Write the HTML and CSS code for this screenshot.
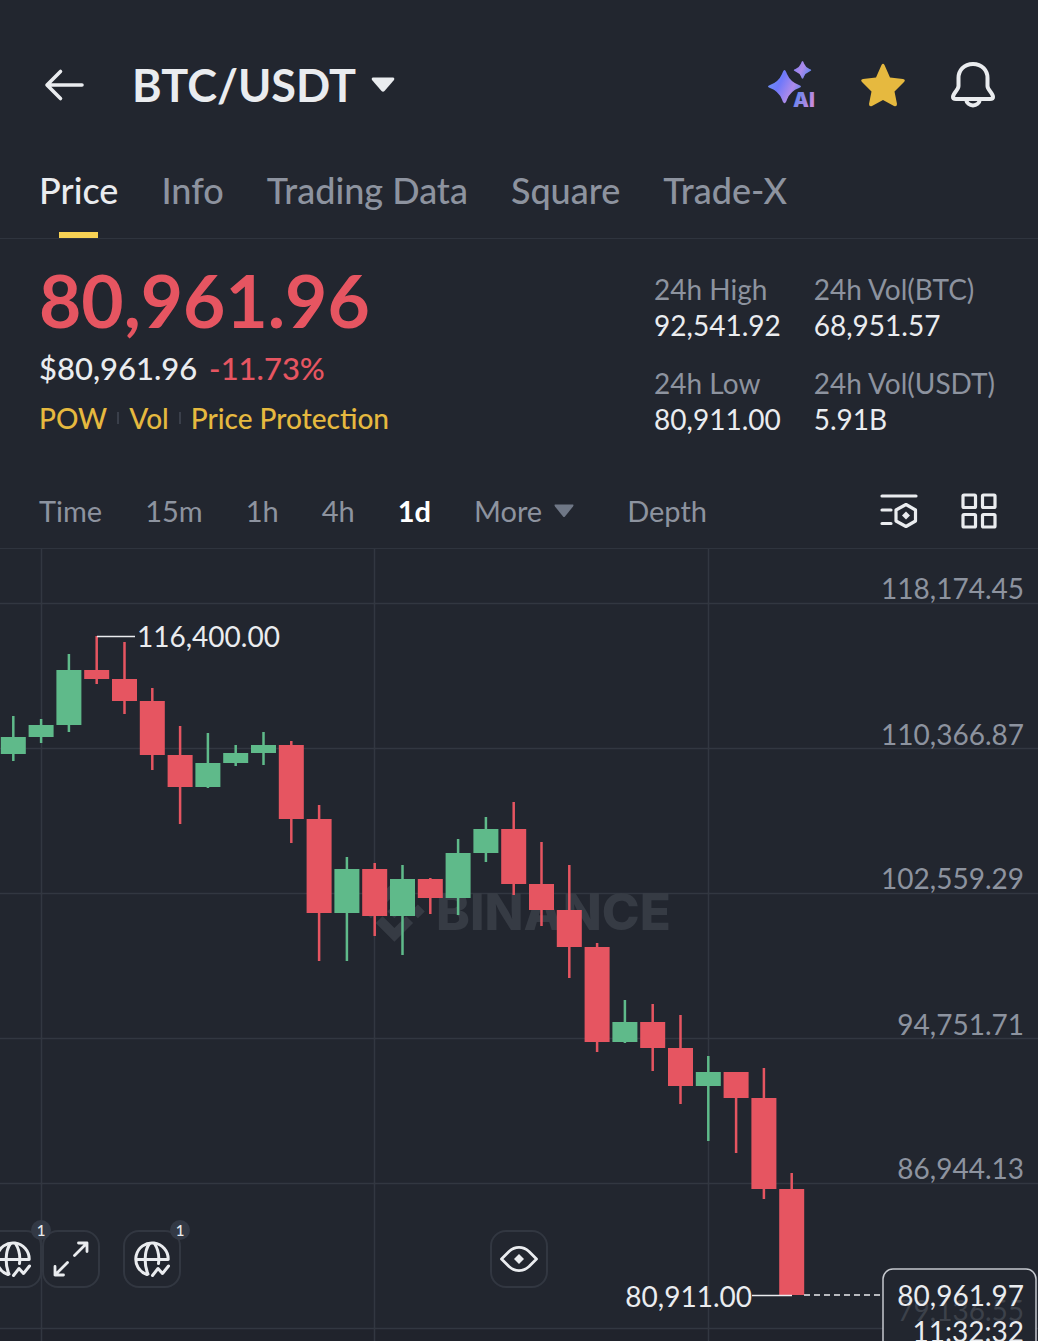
FILE: index.html
```html
<!DOCTYPE html>
<html lang="en">
<head>
    <meta charset="UTF-8">
    <meta name="viewport" content="width=device-width, initial-scale=1.0">
    <title>BTC/USDT</title>
    <link rel="stylesheet" href="styles.css">
</head>
<body>
    <header class="header">
        <button class="icon-btn back-btn" aria-label="Back">
            <svg width="40" height="32" viewBox="0 0 40 32" fill="none" stroke="currentColor" stroke-width="3.600" stroke-linecap="round" stroke-linejoin="round">
                <path d="M37 16H2.500M15.500 2.500L2 16L15.500 29.500"/>
            </svg>
        </button>
        <button class="pair-btn">
            <h1>BTC/USDT</h1>
            <svg width="24" height="16" viewBox="0 0 24 16" fill="currentColor">
                <path d="M2 0.500H22Q24 1 23 3L13.500 14Q12 15.500 10.500 14L1 3Q0 1 2 0.500Z"/>
            </svg>
        </button>
        <div class="header-actions">
            <button class="icon-btn" aria-label="AI">
                <svg width="48" height="48" viewBox="0 0 48 48">
                    <defs>
                        <linearGradient id="aiGradient" gradientUnits="userSpaceOnUse" x1="0" y1="12" x2="48" y2="36">
                            <stop offset="0" stop-color="#6b9cf0"/>
                            <stop offset="0.3" stop-color="#6f78fa"/>
                            <stop offset="0.55" stop-color="#ad8bea"/>
                            <stop offset="0.7" stop-color="#6c86ee"/>
                            <stop offset="1" stop-color="#c58ade"/>
                        </linearGradient>
                    </defs>
                    <g fill="url(#aiGradient)">
                        <path d="M17.500 9Q18.500 9 20 13Q23.500 21 32 24Q36 25.500 32 27Q23.500 30 20 38.500Q17.500 46 15 38.500Q11.500 30 3 27Q-1 25.500 3 24Q11.500 21 15 13Q16.500 9 17.500 9Z"/>
                        <path d="M35.500 0Q36.500 0 37 2.500Q38.700 6.500 42.500 8Q46 9 42.500 10.500Q38.700 12 37 15.500Q35.500 20 34 15.500Q32.300 12 28.500 10.500Q25 9 28.500 8Q32.300 6.500 34 2.500Q34.500 0 35.500 0Z"/>
                        <text class="ai-text" x="26" y="46">AI</text>
                    </g>
                </svg>
            </button>
            <button class="icon-btn" aria-label="Favorite">
                <svg width="44" height="44" viewBox="0 0 44 44" fill="#e6b93f">
                    <path d="M20.500 2Q22 -0.500 23.500 2L29 14.500L42 16Q45 16.500 43 19L33.500 28.500L36 41Q36 44 33 43L22 37L11 43Q8 44 8 41L10.500 28.500L1 19Q-1 16.500 2 16L15 14.500Z"/>
                </svg>
            </button>
            <button class="icon-btn" aria-label="Price alerts">
                <svg width="44" height="46" viewBox="0 0 44 46" fill="none" stroke="#eaecef" stroke-width="4" stroke-linejoin="round">
                    <path d="M22 2C13 2 7.500 8.500 7.500 16V24C7.500 28 2 31 2 35Q2 37 5 37H39Q42 37 42 35C42 31 36.500 28 36.500 24V16C36.500 8.500 31 2 22 2Z"/>
                    <path d="M15 37C16 45.500 28 45.500 29 37"/>
                </svg>
            </button>
        </div>
    </header>

    <nav class="tabs">
        <a href="#price" class="active">Price</a>
        <a href="#info">Info</a>
        <a href="#trading-data">Trading Data</a>
        <a href="#square">Square</a>
        <a href="#trade-x">Trade-X</a>
    </nav>

    <section class="summary">
        <div class="price-block">
            <div class="last-price">80,961.96</div>
            <div class="fiat-price">$80,961.96 <span class="change">-11.73%</span></div>
            <div class="tags">
                <a href="#pow">POW</a>
                <a href="#vol">Vol</a>
                <a href="#protection">Price Protection</a>
            </div>
        </div>
        <dl class="stats">
            <div><dt>24h High</dt><dd>92,541.92</dd></div>
            <div><dt>24h Vol(BTC)</dt><dd>68,951.57</dd></div>
            <div><dt>24h Low</dt><dd>80,911.00</dd></div>
            <div><dt>24h Vol(USDT)</dt><dd>5.91B</dd></div>
        </dl>
    </section>

    <div class="toolbar">
        <div class="intervals">
            <button>Time</button>
            <button>15m</button>
            <button>1h</button>
            <button>4h</button>
            <button class="active">1d</button>
            <button class="more-btn">More
                <svg width="20" height="14" viewBox="0 0 20 14" fill="#6f7786"><path d="M1 0.500H19Q20 1 19 2.500L11 12.500Q10 13.500 9 12.500L1 2.500Q0 1 1 0.500Z"/></svg>
            </button>
            <button>Depth</button>
        </div>
        <div class="chart-tools">
            <button class="icon-btn" aria-label="Indicator settings">
                <svg width="38" height="36" viewBox="0 0 38 36" fill="none" stroke="#eaecef" stroke-width="3.200" stroke-linecap="round" stroke-linejoin="round">
                    <path d="M2 3H36M2 17H11M2 30.500H11"/>
                    <path d="M26 11.500L35.500 17V28L26 33.500L16 28V17Z"/>
                    <path d="M26 18.500L30 22.500L26 26.500L22 22.500Z" fill="#eaecef" stroke="none"/>
                </svg>
            </button>
            <button class="icon-btn" aria-label="Layout">
                <svg width="36" height="36" viewBox="0 0 36 36" fill="none" stroke="#eaecef" stroke-width="3.200">
                    <rect x="2" y="2" width="12.500" height="12.500" rx="1"/>
                    <rect x="21.500" y="2" width="12.500" height="12.500" rx="1"/>
                    <rect x="2" y="21.500" width="12.500" height="12.500" rx="1"/>
                    <rect x="21.500" y="21.500" width="12.500" height="12.500" rx="1"/>
                </svg>
            </button>
        </div>
    </div>

    <main class="chart">
        <svg class="chart-svg" viewBox="0 0 1038 792">
            <rect class="volume-area" x="0" y="780" width="1038" height="12"/>
            <path class="grid" d="M0 54.500H1038M0 199.500H1038M0 344.500H1038M0 489.500H1038M0 634.500H1038M0 779.500H1038M41.500 0V792M374.500 0V792M708.500 0V792"/>
            <g class="watermark">
                <path transform="translate(364 332) scale(0.480)" d="M38.730 53.200L63.320 28.620L87.920 53.220L102.220 38.910L63.320 0L24.420 38.900ZM0 63.310L14.300 49L28.610 63.310L14.300 77.610ZM38.730 73.410L63.320 98L87.920 73.400L102.230 87.690L63.330 126.600L24.420 87.720ZM98 63.310L112.300 49L126.610 63.300L112.300 77.620ZM77.830 63.300L63.320 48.780L48.800 63.300L63.320 77.810Z"/>
                <text x="436" y="381">BINANCE</text>
            </g>
            <g id="candles"></g>
            <g class="axis">
                <text x="1024" y="50">118,174.45</text>
                <text x="1024" y="196">110,366.87</text>
                <text x="1024" y="340">102,559.29</text>
                <text x="1024" y="486">94,751.71</text>
                <text x="1024" y="630">86,944.13</text>
            </g>
            <g class="marker">
                <path d="M97 87.500H135M752 746.500H792"/>
                <text x="137" y="98">116,400.00</text>
                <text x="752" y="758" text-anchor="end">80,911.00</text>
            </g>
            <path class="price-line" d="M804 746H883"/>
            <rect class="price-box" x="883" y="720" width="153" height="90" rx="10"/>
            <g class="price-label">
                <text class="dim" x="1024" y="772">79,136.55</text>
                <text x="1024" y="757">80,961.97</text>
                <text x="1024" y="793">11:32:32</text>
            </g>
        </svg>

        <div class="float-tools">
            <button class="float-btn" aria-label="Events">
                <svg width="36" height="36" viewBox="0 0 36 36"><use href="#globe"/></svg>
                <span class="badge">1</span>
            </button>
            <button class="float-btn" aria-label="Fullscreen">
                <svg width="36" height="36" viewBox="0 0 36 36" fill="none" stroke="#eaecef" stroke-width="2.800" stroke-linecap="round" stroke-linejoin="round">
                    <path d="M21.500 14.500L34 2M25.500 2H34V10.500M14.500 21.500L2 34M2 25.500V34H10.500"/>
                </svg>
            </button>
            <button class="float-btn spaced" aria-label="News">
                <svg width="36" height="36" viewBox="0 0 36 36">
                    <g id="globe" fill="none" stroke="#eaecef" stroke-width="3" stroke-linecap="round" stroke-linejoin="round">
                        <path d="M13 33.500A16.200 16.200 0 1 1 34.200 18.500H2"/>
                        <path d="M15.500 2.500C10 10 10 24 14 33M20.500 2.500C24 8 25.500 15 24.500 22.500"/>
                        <path d="M18.500 34.500L24 27.500L28.500 32.500L34.500 25"/>
                    </g>
                </svg>
                <span class="badge">1</span>
            </button>
        </div>
        <button class="float-btn eye-btn" aria-label="Toggle overlays">
            <svg width="38" height="26" viewBox="0 0 38 26" fill="none" stroke="#eaecef" stroke-width="2.800" stroke-linejoin="round">
                <path d="M1.500 13L9 5.500C15 0 23 0 29 5.500L36.500 13L29 20.500C23 26 15 26 9 20.500Z"/>
                <path d="M19 8L24 13L19 18L14 13Z" fill="#eaecef" stroke="none"/>
            </svg>
        </button>
    </main>

    <script>
        // [direction, high, body top, body bottom, low]
        const candles = [
            ['up', 167, 188, 205, 212],
            ['up', 170, 176, 188, 194],
            ['up', 105, 121, 176, 183],
            ['down', 87, 121, 130, 135],
            ['down', 93, 130, 152, 165],
            ['down', 139, 152, 206, 221],
            ['down', 177, 206, 238, 275],
            ['up', 184, 214, 238, 239],
            ['up', 196, 204, 214, 217],
            ['up', 183, 196, 204, 216],
            ['down', 192, 196, 270, 294],
            ['down', 256, 270, 364, 412],
            ['up', 308, 320, 364, 412],
            ['down', 314, 320, 367, 387],
            ['up', 316, 330, 367, 406],
            ['down', 329, 330, 349, 365],
            ['up', 290, 304, 349, 366],
            ['up', 268, 280, 304, 313],
            ['down', 253, 280, 335, 346],
            ['down', 293, 335, 361, 377],
            ['down', 316, 361, 398, 429],
            ['down', 394, 398, 493, 503],
            ['up', 451, 473, 493, 494],
            ['down', 455, 473, 499, 522],
            ['down', 466, 499, 537, 555],
            ['up', 507, 523, 537, 592],
            ['down', 523, 523, 549, 604],
            ['down', 519, 549, 640, 650],
            ['down', 624, 640, 746, 746]
        ];

        const step = 27.8;
        const bodyWidth = 25;
        const group = document.getElementById('candles');

        function addRect(cls, x, y, width, height) {
            const rect = document.createElementNS('http://www.w3.org/2000/svg', 'rect');
            rect.setAttribute('class', cls);
            rect.setAttribute('x', x);
            rect.setAttribute('y', y);
            rect.setAttribute('width', width);
            rect.setAttribute('height', height);
            group.appendChild(rect);
        }

        candles.forEach(([dir, high, top, bottom, low], i) => {
            const center = 13.3 + i * step;
            addRect(dir, center - 1.25, high, 2.5, low - high);
            addRect(dir, center - bodyWidth / 2, top, bodyWidth, bottom - top);
        });
    </script>
</body>
</html>
```

FILE: styles.css
```css
* {
    margin: 0;
    padding: 0;
    box-sizing: border-box;
}

body {
    font-family: Lato, 'Open Sans', sans-serif;
    background: #22262f;
    color: #eaecef;
    font-size: 28px;
    overflow-x: hidden;
}

button {
    background: none;
    border: none;
    color: inherit;
    font: inherit;
    cursor: pointer;
}

a {
    color: inherit;
    text-decoration: none;
}

svg {
    display: block;
    overflow: visible;
}

.header {
    display: flex;
    align-items: center;
    height: 120px;
    padding: 50px 43px 0 45px;
}

.icon-btn {
    display: flex;
    align-items: center;
    justify-content: center;
}

.pair-btn {
    display: flex;
    align-items: center;
    gap: 15px;
    margin-left: 47px;
}

.pair-btn h1 {
    font-size: 45px;
    font-weight: 700;
    line-height: 56px;
}

.header-actions {
    display: flex;
    align-items: center;
    gap: 46px;
    margin-left: auto;
}

.ai-text {
    font-family: Inter, sans-serif;
    font-size: 20px;
    font-weight: 900;
}

.tabs {
    display: flex;
    gap: 43px;
    padding: 49px 39px 0;
    border-bottom: 1px solid #2f343e;
    font-size: 36px;
    font-weight: 500;
    line-height: 42px;
    color: #8d939f;
    white-space: nowrap;
}

.tabs a {
    display: flex;
    flex-direction: column;
    align-items: center;
    padding-bottom: 27px;
}

.tabs .active {
    color: #eaecef;
    padding-bottom: 0;
}

.tabs .active::after {
    content: '';
    width: 39px;
    height: 6px;
    margin-top: 21px;
    background: #f8d254;
}

.summary {
    display: flex;
    justify-content: space-between;
    padding: 25px 43px 35px 39px;
}

.last-price {
    font-size: 73px;
    font-weight: 700;
    line-height: 72px;
    color: #e65561;
}

.fiat-price {
    margin-top: 12px;
    font-size: 31px;
    font-weight: 500;
    line-height: 40px;
}

.change {
    margin-left: 4px;
    color: #e65561;
}

.tags {
    display: flex;
    margin-top: 10px;
    font-weight: 500;
    line-height: 40px;
    color: #e6b93f;
}

.tags a {
    display: flex;
    align-items: center;
}

.tags a + a::before {
    content: '';
    width: 2px;
    height: 12px;
    margin: 0 10px;
    background: #3a3f4a;
}

.stats {
    display: grid;
    grid-template-columns: max-content max-content;
    gap: 21px 33px;
    padding-top: 7px;
    line-height: 36px;
}

.stats dt {
    color: #8d939f;
}

.toolbar {
    display: flex;
    align-items: center;
    justify-content: space-between;
    height: 76px;
    padding: 0 41px 0 39px;
    border-bottom: 1px solid #2f343e;
}

.intervals {
    display: flex;
    gap: 43px;
    font-size: 29px;
    color: #8d939f;
}

.intervals .active {
    color: #ffffff;
    font-weight: 700;
}

.more-btn {
    display: flex;
    align-items: center;
    gap: 12px;
    margin-right: 10px;
}

.chart-tools {
    display: flex;
    align-items: center;
    gap: 43px;
}

.chart {
    position: relative;
    overflow: hidden;
}

.chart-svg {
    width: 100%;
    height: auto;
    overflow: hidden;
}

.volume-area {
    fill: #20232c;
}

.grid {
    stroke: #323741;
    stroke-width: 1.5;
}

.watermark {
    fill: #363b44;
    font-family: Inter, sans-serif;
    font-size: 51px;
    font-weight: 800;
}

.up {
    fill: #5fba8a;
}

.down {
    fill: #e65561;
}

.axis text {
    fill: #8d939f;
    text-anchor: end;
}

.marker text {
    fill: #eaecef;
}

.marker path {
    stroke: #eaecef;
    stroke-width: 1.5;
}

.price-line {
    stroke: #eaecef;
    stroke-width: 1.5;
    stroke-dasharray: 6 4;
}

.price-box {
    fill: #22262f;
    stroke: #c5c8ce;
    stroke-width: 1.5;
}

.price-label text {
    fill: #eaecef;
    text-anchor: end;
}

.price-label .dim {
    fill: #3c414a;
}

/* buttons floating over the chart */
.float-tools {
    position: absolute;
    left: -16px;
    bottom: 53px;
    display: flex;
}

.float-btn {
    position: relative;
    display: flex;
    align-items: center;
    justify-content: center;
    width: 58px;
    height: 58px;
    border: 2px solid #323741;
    border-radius: 16px;
    background: #22262f;
}

.float-btn.spaced {
    margin-left: 23px;
}

.eye-btn {
    position: absolute;
    left: 50%;
    bottom: 53px;
    transform: translateX(-50%);
}

.badge {
    position: absolute;
    top: -12px;
    right: -11px;
    z-index: 1;
    width: 20px;
    height: 20px;
    border-radius: 50%;
    background: #333945;
    font-size: 15px;
    font-weight: 500;
    line-height: 20px;
    text-align: center;
}
```
